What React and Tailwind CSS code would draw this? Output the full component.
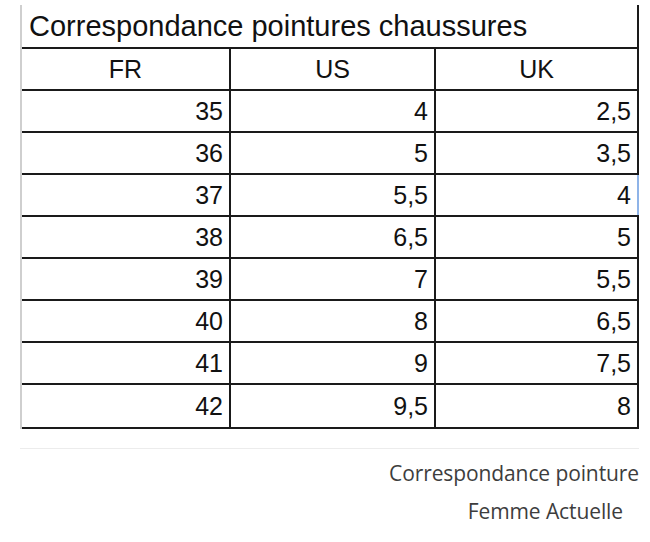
const rows = [
  ["35", "4", "2,5"],
  ["36", "5", "3,5"],
  ["37", "5,5", "4"],
  ["38", "6,5", "5"],
  ["39", "7", "5,5"],
  ["40", "8", "6,5"],
  ["41", "9", "7,5"],
  ["42", "9,5", "8"],
];

export default function App() {
  return (
    <div className="w-[650px] h-[542px] bg-white pt-[5px] pl-[20px] font-['Liberation_Sans',Arial,sans-serif] text-[#111]">
      {/* Table */}
      <div className="w-[619px] border-l-2 border-l-[#cfcfcf] border-r-2 border-r-[#1a1a1a]">
        <div className="h-[44px] border-b-2 border-[#1a1a1a] pl-[7px] flex items-center text-[29px] leading-none">
          Correspondance pointures chaussures
        </div>
        <div className="grid grid-cols-[209px_205px_201px] h-[42px] border-b-2 border-[#1a1a1a] text-[25px] leading-none">
          <div className="border-r-2 border-[#1a1a1a] flex items-center justify-center">FR</div>
          <div className="border-r-2 border-[#1a1a1a] flex items-center justify-center">US</div>
          <div className="flex items-center justify-center">UK</div>
        </div>
        {rows.map((r, i) => (
          <div
            key={r[0]}
            className={`grid grid-cols-[209px_205px_201px] border-b-2 border-[#1a1a1a] text-[25px] leading-none ${
              i === rows.length - 1 ? "h-[44px]" : "h-[42px]"
            }`}
          >
            <div className="border-r-2 border-[#1a1a1a] flex items-center justify-end pr-[6px]">{r[0]}</div>
            <div className="border-r-2 border-[#1a1a1a] flex items-center justify-end pr-[6px]">{r[1]}</div>
            <div className="relative flex items-center justify-end pr-[6px]">
              {r[2]}
              {i === 2 && (
                <span className="absolute right-[-2px] top-0 bottom-0 w-[2px] bg-[#8fb4e8]" />
              )}
            </div>
          </div>
        ))}
      </div>

      {/* Caption */}
      <div className="w-[619px] mt-[19px] border-t border-[#ececec] pt-[14px] font-['Open_Sans',sans-serif] text-[#3d3d3d] text-[21px] tracking-[-0.1px] leading-none">
        <p className="text-right">Correspondance pointure</p>
        <p className="text-right pr-[16px] mt-[17px]">Femme Actuelle</p>
      </div>
    </div>
  );
}
